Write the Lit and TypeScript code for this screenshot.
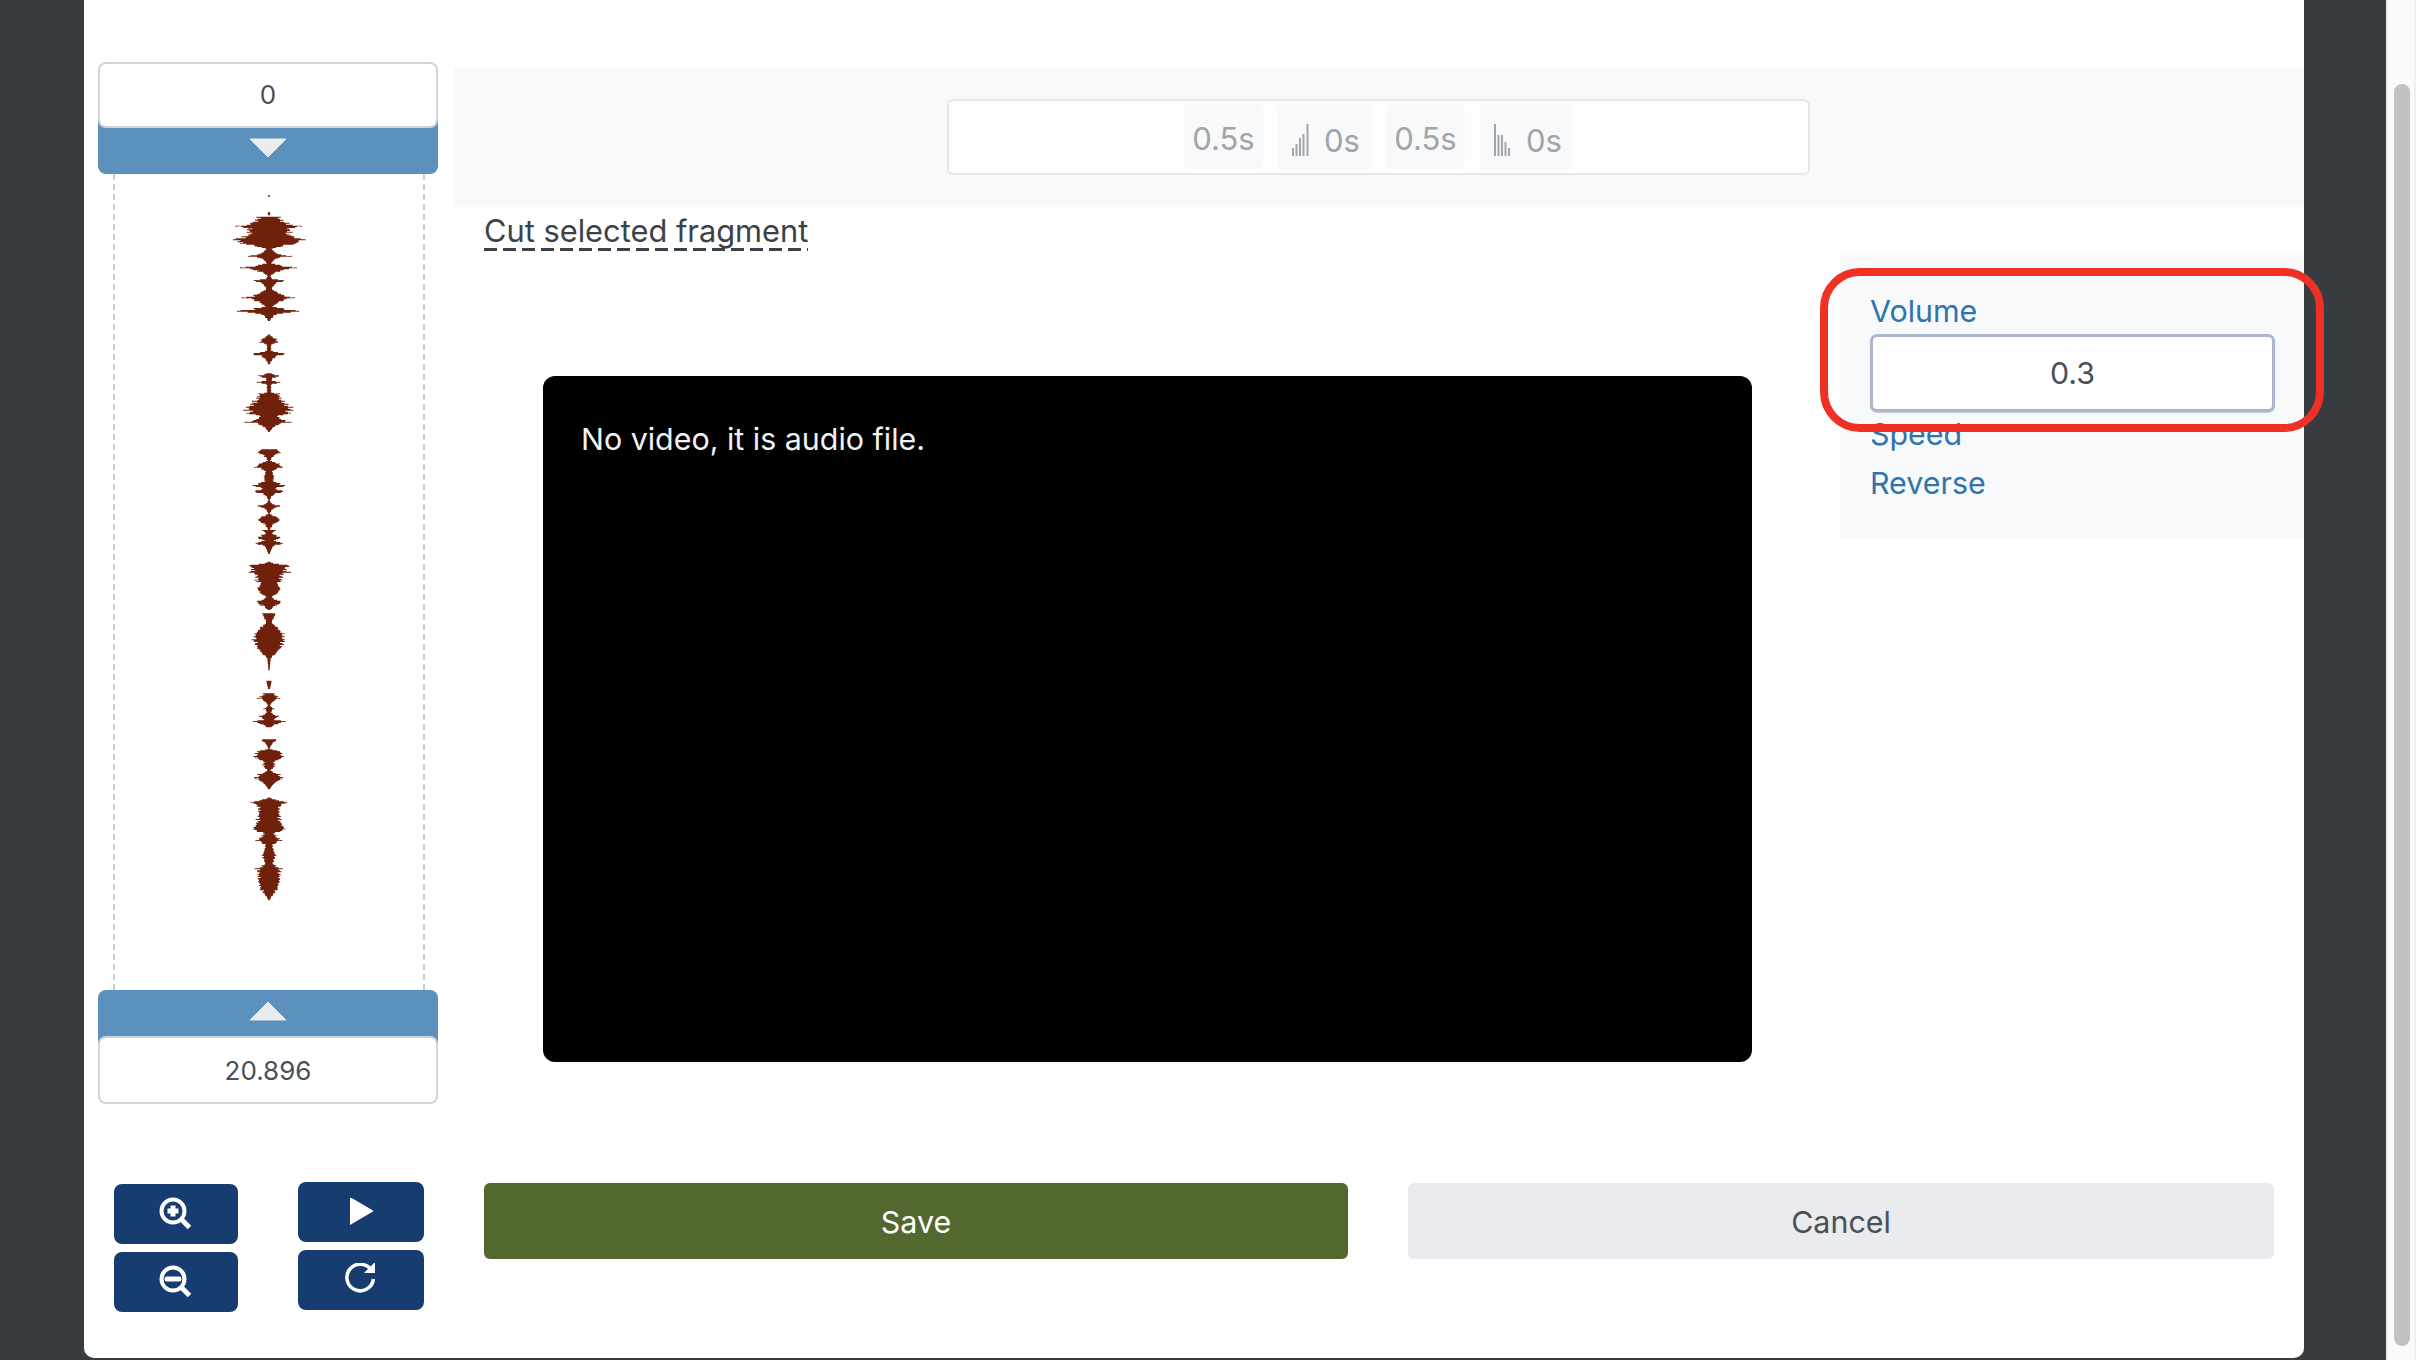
import { LitElement, html, css, svg } from "lit";
import { customElement } from "lit/decorators.js";

type P = [number, number];
const z2: P[][] = [
  [[35,2],[40,5],[45,2]],
  [[50,30],[62,40],[78,88],[85,60],[95,60],[103,60],[118,105],[128,80],[138,40],[145,8],[160,25],[167,60],[175,20],[188,8],[202,82],[212,30],[225,5],[235,8],[240,45],[250,20],[265,8],[278,30],[292,70],[305,30],[318,12],[332,95],[342,20],[362,2]],
  [[403,2],[415,20],[425,28],[433,6],[450,6],[460,48],[472,15],[492,2]],
  [[520,10],[527,30],[533,10],[540,8],[545,35],[553,6],[575,6],[580,30],[590,30],[605,45],[623,68],[640,55],[648,25],[665,58],[675,20],[695,2]],
  [[748,25],[757,35],[765,15],[780,4],[790,30],[800,38],[812,10],[830,15],[840,12],[855,48],[865,20],[873,42],[885,10],[900,2],[910,10],[917,33],[925,12],[940,2],[950,25],[960,35],[970,15],[990,2]],
];
const z3: P[][] = [
  [[0,20],[8,10],[22,40],[30,15],[38,42],[48,12],[72,2]],
  [[95,4],[105,58],[122,45],[125,80],[128,40],[150,35],[160,25],[175,35],[190,25],[200,8],[215,40],[225,20],[240,3]],
  [[250,20],[262,15],[275,8],[290,25],[310,42],[330,42],[350,38],[370,20],[385,5],[420,2]],
  [[452,8],[462,6],[475,3]],
  [[490,15],[503,30],[515,10],[525,3],[535,15],[545,6],[558,28],[568,15],[573,50],[580,25],[592,4]],
  [[628,25],[640,10],[655,2],[663,35],[682,42],[695,15],[708,18],[720,5],[732,30],[745,40],[760,15],[778,2]],
  [[802,2],[815,52],[830,30],[855,30],[875,35],[897,50],[910,15],[930,35],[945,10],[962,15],[975,20],[1000,12],[1015,35],[1035,30],[1050,32],[1075,25],[1090,15],[1110,2]],
];

function blob(seg: P[], y0: number): string {
  const right: string[] = [];
  const left: string[] = [];
  for (let i = 0; i < seg.length - 1; i++) {
    const [a, ha] = seg[i];
    const [b, hb] = seg[i + 1];
    for (let y = a; y < b; y += 3) {
      const t = (y - a) / (b - a);
      // ease towards the narrow ends so that the lobes read as spiky bursts, not diamonds
      const e = hb > ha ? t * t : 1 - (1 - t) * (1 - t);
      const h = ha + (hb - ha) * (0.5 * t + 0.5 * e);
      const n = 1 + 0.2 * Math.sin(y * 2.1) * Math.cos(y * 0.7);
      const w = Math.max(0.7, (h * n) / 3);
      const yy = y0 + y / 3 - 190;
      const w2 = Math.max(0.7, w * (1 + 0.08 * Math.sin(y * 3.3)));
      right.push(`${(50 + w).toFixed(1)},${yy.toFixed(1)}`, `${(50 + w).toFixed(1)},${(yy + 1).toFixed(1)}`);
      left.unshift(`${(50 - w2).toFixed(1)},${(yy + 1).toFixed(1)}`, `${(50 - w2).toFixed(1)},${yy.toFixed(1)}`);
    }
  }
  return [...right, ...left].join(" ");
}
const blobs = [
  ...z2.map((s) => blob(s, 200)),
  ...z3.map((s) => blob(s, 530)),
];

const zoomPlus = svg`<circle cx="17" cy="17" r="11.5" fill="none" stroke="#fff" stroke-width="4"/><path d="M25.500 25.500 L33.500 33.500" stroke="#fff" stroke-width="5"/><path d="M17 11.500V22.500M11.500 17H22.500" stroke="#fff" stroke-width="5"/>`;
const zoomMinus = svg`<circle cx="17" cy="17" r="11.5" fill="none" stroke="#fff" stroke-width="4"/><path d="M25.500 25.500 L33.500 33.500" stroke="#fff" stroke-width="5"/><path d="M11 17H23" stroke="#fff" stroke-width="5" stroke-linecap="round"/>`;

@customElement("app-root")
export class AppRoot extends LitElement {
  static styles = css`
    :host {
      display: block;
      font-family: Inter, "Liberation Sans", sans-serif;
    }
    * { box-sizing: border-box; }
    .page {
      position: relative;
      width: 2416px;
      height: 1360px;
      overflow: hidden;
      background: #373c40;
      display: flex;
      font-size: 30.4px;
      line-height: 45px;
    }
    .modal {
      margin-left: 84px;
      width: 2220px;
      height: 1358px;
      background: #fff;
      border-radius: 0 0 10px 10px;
      padding: 62px 0 0 14px;
      display: flex;
      flex-direction: column;
    }
    .scroll {
      margin-left: 82px;
      width: 30px;
      height: 1360px;
      background: #fafafa;
      border-left: 2px solid #efefef;
      border-right: 2px solid #efefef;
      padding: 84px 4px 14px 6px;
    }
    .thumb { width: 16px; height: 100%; background: #c2c2c2; border-radius: 8px; }

    .upper { display: flex; gap: 16px; height: 1042px; }
    .left { width: 340px; display: flex; flex-direction: column; }
    .num {
      position: relative;
      z-index: 1;
      display: block;
      width: 100%;
      border: 2px solid #ced4da;
      border-radius: 8px;
      background: #fff;
      color: #495057;
      font: 26px Inter, sans-serif;
      text-align: center;
      padding: 0 0 2px;
      outline: none;
    }
    .num.a { height: 66px; }
    .num.b { height: 68px; margin-top: -10px; padding: 0; }
    .band {
      height: 56px;
      background: #5d91bd;
      display: flex;
      justify-content: center;
    }
    .band.down { margin-top: -10px; padding-top: 20px; border-radius: 0 0 8px 8px; }
    .band.up { padding-top: 11px; border-radius: 8px 8px 0 0; }
    .band svg { display: block; }
    .dash {
      flex: 1;
      margin: 0 13px 0 15px;
      border-left: 2px dashed #ccc;
      border-right: 2px dashed #ccc;
      display: flex;
      justify-content: center;
      padding-top: 16px;
    }
    .right { flex: 1; padding-top: 5px; min-width: 0; }
    .trim {
      height: 140px;
      background: #f8f9fa;
      display: flex;
      justify-content: center;
      padding: 32px 1px 0 0;
    }
    .trimbox {
      width: 863px;
      height: 76px;
      border: 2px solid #e4e6e9;
      border-radius: 6px;
      background: #fcfdfd;
      display: flex;
      justify-content: center;
      gap: 15px;
      padding-top: 3px;
      color: #a1a4a8;
    }
    .chip {
      background: #f8f9fa;
      border-radius: 6px;
      height: 65px;
      display: flex;
      align-items: center;
      justify-content: center;
      line-height: 1;
      font-size: 31px;
    }
    .chip.w { width: 79px; padding-top: 3px; }
    .chip.i { width: 93px; height: 67px; gap: 15px; padding: 6px 0 0 3px; }
    .chip.i svg { margin-top: -1px; }
    .cut {
      height: 48px;
      padding: 1px 0 0 30px;
      color: #3b4147;
      font-size: 30.8px;
      line-height: 46px;
    }
    .cut span {
      display: inline-block;
      height: 43px;
      line-height: 46px;
      background: repeating-linear-gradient(90deg, #3b4147 0 13px, transparent 13px 19px) left bottom / 100% 3px no-repeat;
    }
    .work { display: flex; align-items: flex-start; }
    .video {
      margin: 121px 0 0 89px;
      width: 1209px;
      height: 686px;
      background: #000;
      border-radius: 12px;
      color: #f1f3f5;
      padding: 41px 0 0 38px;
      line-height: 45px;
    }
    .side {
      margin-left: 88px;
      width: 464px;
      height: 283px;
      background: #f8f9fa;
      padding: 34px 0 0 30px;
      color: #2f74ad;
    }
    .vol {
      display: block;
      width: 405px;
      height: 78px;
      border: 3px solid #aab7cd;
      box-shadow: 0 1px 1px #c5ccd8;
      border-radius: 7px;
      background: #fff;
      color: #495057;
      font: 30.4px Inter, sans-serif;
      text-align: center;
      padding: 0;
      outline: none;
    }
    .side .sp { margin-bottom: 4px; }

    .lower { display: flex; gap: 60px; margin: 78px 0 0 16px; align-items: flex-start; }
    .tools { display: flex; flex-direction: column; gap: 8px; }
    .tools.z { width: 124px; margin-top: 2px; }
    .tools.p { width: 126px; }
    .tool {
      height: 60px;
      background: #163c70;
      border-radius: 8px;
      border: 0;
      padding: 0;
      display: flex;
      align-items: center;
      justify-content: center;
    }
    .act {
      height: 76px;
      border: 0;
      border-radius: 6px;
      font: 30.4px Inter, sans-serif;
      margin-top: 1px;
      padding: 1px 0 0;
    }
    .save { width: 864px; background: #53682f; color: #fff; }
    .cancel { width: 866px; background: #e9ebef; color: #495057; }

    .mark {
      position: absolute;
      left: 1820px;
      top: 268px;
      width: 504px;
      height: 164px;
      border: 8px solid #ee3124;
      border-radius: 40px;
      z-index: 2;
    }
  `;

  render() {
    return html`
      <div class="page">
        <div class="modal">
          <div class="upper">
            <div class="left">
              <input class="num a" .value=${"0"} />
              <div class="band down">
                <svg width="38" height="20" viewBox="0 0 38 20"><path d="M1 1H37L19 19Z" fill="#e9ecef" stroke="#e9ecef" stroke-width="1" stroke-linejoin="round"/></svg>
              </div>
              <div class="dash">
                <svg width="100" height="720" viewBox="0 0 100 720">
                  <rect x="49" y="5" width="2" height="2" fill="#9b5a48"/>
                  ${blobs.map((p) => svg`<polygon points=${p} fill="#70210b"/>`)}
                </svg>
              </div>
              <div class="band up">
                <svg width="38" height="20" viewBox="0 0 38 20"><path d="M1 19H37L19 1Z" fill="#e9ecef" stroke="#e9ecef" stroke-width="1" stroke-linejoin="round"/></svg>
              </div>
              <input class="num b" .value=${"20.896"} />
            </div>
            <div class="right">
              <div class="trim">
                <div class="trimbox">
                  <div class="chip w">0.5s</div>
                  <div class="chip i">
                    <svg width="17" height="32" viewBox="0 0 17 32" fill="#a1a4a8"><rect x="0" y="24" width="2" height="8"/><rect x="3.500" y="20" width="2" height="12"/><rect x="7" y="14" width="2" height="18"/><rect x="10.500" y="10" width="2" height="22"/><rect x="14.500" y="0" width="2" height="32"/></svg>
                    <span>0s</span>
                  </div>
                  <div class="chip w">0.5s</div>
                  <div class="chip i">
                    <svg width="17" height="32" viewBox="0 0 17 32" fill="#a1a4a8"><rect x="0" y="0" width="2" height="32"/><rect x="3.500" y="11" width="2" height="21"/><rect x="7" y="11" width="2" height="21"/><rect x="10.500" y="18" width="2" height="14"/><rect x="14" y="24" width="2" height="8"/></svg>
                    <span>0s</span>
                  </div>
                </div>
              </div>
              <div class="cut"><span>Cut selected fragment</span></div>
              <div class="work">
                <div class="video">No video, it is audio file.</div>
                <div class="side">
                  <div>Volume</div>
                  <input class="vol" .value=${"0.3"} />
                  <div class="sp">Speed</div>
                  <div>Reverse</div>
                </div>
              </div>
            </div>
          </div>
          <div class="lower">
            <div class="tools z">
              <button class="tool"><svg width="38" height="38" viewBox="1 1 38 38">${zoomPlus}</svg></button>
              <button class="tool"><svg width="38" height="38" viewBox="1 1 38 38">${zoomMinus}</svg></button>
            </div>
            <div class="tools p">
              <button class="tool"><svg width="24" height="28" viewBox="-1 1 24 28"><path d="M0 0L24 14L0 28Z" fill="#fff"/></svg></button>
              <button class="tool"><svg width="34" height="34" viewBox="1 2 34 34"><path d="M28.500 9.500A13.300 13.300 0 1 0 30.400 18" fill="none" stroke="#fff" stroke-width="3.500"/><path d="M32 1V12H21Z" fill="#fff"/></svg></button>
            </div>
            <button class="act save">Save</button>
            <button class="act cancel">Cancel</button>
          </div>
        </div>
        <div class="scroll"><div class="thumb"></div></div>
        <div class="mark"></div>
      </div>
    `;
  }
}
